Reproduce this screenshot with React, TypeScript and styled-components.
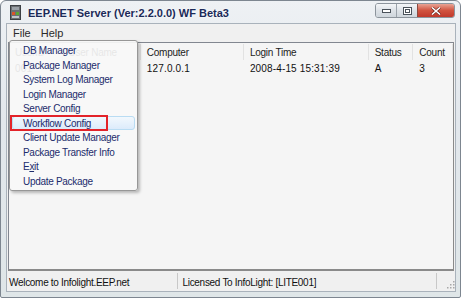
import * as React from 'react';
import styled, { createGlobalStyle } from 'styled-components';

const Global = createGlobalStyle`
  html, body { margin: 0; padding: 0; background: #fff; }
  body { font-family: "Liberation Sans", Arial, sans-serif; }
`;

const Window = styled.div`
  width: 461px;
  height: 298px;
  box-sizing: border-box;
  display: flex;
  flex-direction: column;
  background: linear-gradient(#eef1f4, #e2e7ec 40%, #dfe6e8);
  border: 1px solid #7d8690;
  border-radius: 6px 6px 2px 2px;
  overflow: hidden;
  position: relative;
`;

const TitleBar = styled.div`
  height: 22px;
  display: flex;
  align-items: center;
  padding: 0 5px 0 9px;
  flex-shrink: 0;
`;

const Title = styled.div`
  margin-left: 7px;
  margin-top: 2px;
  font-size: 11px;
  color: #1b2a58;
  font-weight: 700;
  flex: 1;
  text-shadow: 0 0 3px #fff;
`;

const Caption = styled.div`
  display: flex;
  align-self: flex-start;
  margin-top: 2px;
  border: 1px solid #8c949c;
  border-radius: 3px;
  overflow: hidden;
`;

const CapBtn = styled.div<{ $close?: boolean; $w: number }>`
  width: ${p => p.$w}px;
  height: 13px;
  display: flex;
  align-items: center;
  justify-content: center;
  background: ${p => p.$close
    ? 'linear-gradient(#e8a394, #d1533f 50%, #c0392b)'
    : 'linear-gradient(#f4f6f8, #dde2e7 50%, #cfd6dc)'};
  border-left: ${p => p.$close ? '1px solid #8c4a40' : '1px solid #9aa2aa'};
  &:first-child { border-left: none; }
`;

const Client = styled.div`
  flex: 1;
  display: flex;
  flex-direction: column;
  margin: 0 4px 5px 5px;
  background: #f0f0f0;
  position: relative;
  border: 1px solid #a9b2bb;
`;

const MenuBar = styled.div`
  height: 17px;
  display: flex;
  align-items: center;
  padding-left: 1px;
  font-size: 11px;
  color: #2a2a2a;
  flex-shrink: 0;
`;

const MenuTop = styled.div`
  padding: 0 5px;
  height: 16px;
  line-height: 16px;
`;

const ListWrap = styled.div`
  flex: 1;
  margin: 1px 1px 0 1px;
  background: #f5f5f5;
  border: 1px solid #828790;
  border-right-color: #8a8a8a;
  border-bottom: 2px solid #8a8a8a;
  font-size: 10px;
  color: #111;
`;

const Row = styled.div<{ $head?: boolean }>`
  display: flex;
  height: 16px;
  line-height: 17px;
  margin-top: ${p => p.$head ? 1 : 0}px;
  color: ${p => p.$head ? '#222' : '#111'};
  letter-spacing: ${p => p.$head ? -0.25 : 0.15}px;
`;

const Cell = styled.div<{ $w: number; $head?: boolean }>`
  width: ${p => p.$w}px;
  box-sizing: border-box;
  padding-left: 6px;
  white-space: nowrap;
  overflow: hidden;
  border-right: ${p => p.$head ? '1px solid #e2e2e2' : 'none'};
`;

const StatusBar = styled.div`
  height: 20px;
  display: flex;
  align-items: center;
  font-size: 10px;
  letter-spacing: -0.3px;
  color: #111;
  flex-shrink: 0;
`;

const StatusCell = styled.div<{ $w?: number }>`
  ${p => p.$w ? `width: ${p.$w}px;` : 'flex: 1;'}
  height: 16px;
  line-height: 19px;
  padding-left: 2px;
  box-sizing: border-box;
  border-right: 1px solid #c8c8c8;
  white-space: nowrap;
`;

const Grip = styled.div`
  width: 18px;
  height: 16px;
  display: flex;
  align-items: flex-end;
  justify-content: flex-end;
`;

const DropMenu = styled.div`
  position: absolute;
  left: 2px;
  top: 16px;
  width: 129px;
  box-sizing: border-box;
  padding: 2px;
  background: rgba(247, 247, 247, 0.92);
  border: 1px solid #979797;
  border-radius: 3px;
  box-shadow: 2px 2px 3px rgba(0, 0, 0, 0.25);
  font-size: 10px;
  letter-spacing: -0.3px;
  color: #1c2c6c;
`;

const Item = styled.div<{ $hot?: boolean }>`
  height: 14.5px;
  line-height: 14px;
  padding-left: 10px;
  position: relative;
  border-radius: 3px;
  box-sizing: border-box;
  border: 1px solid ${p => p.$hot ? '#b9dcf3' : 'transparent'};
  background: ${p => p.$hot ? 'linear-gradient(#f2f8fd, #dcebfb)' : 'transparent'};
  white-space: nowrap;
`;

const Annotation = styled.div`
  position: absolute;
  left: -3px;
  top: -2px;
  width: 98px;
  height: 16px;
  border: 2px solid #e3232a;
  box-sizing: border-box;
`;

const columns = [
  { t: 'UserID', w: 54 },
  { t: 'User Name', w: 79 },
  { t: 'Computer', w: 104 },
  { t: 'Login Time', w: 126 },
  { t: 'Status', w: 45 },
  { t: 'Count', w: 40 },
];

const row = ['001', '', '127.0.0.1', '2008-4-15 15:31:39', 'A', '3'];

const items = [
  'DB Manager',
  'Package Manager',
  'System Log Manager',
  'Login Manager',
  'Server Config',
  'Workflow Config',
  'Client Update Manager',
  'Package Transfer Info',
  'Exit',
  'Update Package',
];

function AppIcon() {
  return (
    <svg width="11" height="15" viewBox="0 0 11 15">
      <rect x="0.5" y="0.5" width="10" height="14" fill="#6b6f73" stroke="#3c4044" />
      <rect x="2" y="2" width="7" height="3" fill="#9aa0a6" />
      <rect x="2" y="7" width="3" height="3" fill="#d9542b" />
      <rect x="6" y="7" width="3" height="3" fill="#5aa832" />
      <rect x="2" y="11" width="7" height="2" fill="#c0c4c8" />
    </svg>
  );
}

export default function App() {
  return (
    <>
      <Global />
      <Window>
        <TitleBar>
          <AppIcon />
          <Title>EEP.NET Server (Ver:2.2.0.0) WF Beta3</Title>
          <Caption>
            <CapBtn $w={20}>
              <svg width="9" height="4"><rect x="0.5" y="0.5" width="8" height="3" fill="#fff" stroke="#4a525a" /></svg>
            </CapBtn>
            <CapBtn $w={20}>
              <svg width="9" height="8"><rect x="0.5" y="0.5" width="8" height="7" fill="#fff" stroke="#4a525a" /><rect x="2.5" y="2.5" width="4" height="3" fill="none" stroke="#4a525a" /></svg>
            </CapBtn>
            <CapBtn $w={36} $close>
              <svg width="10" height="8" viewBox="0 0 10 8">
                <path d="M1 0.5 L9 7.5 M9 0.5 L1 7.5" stroke="#5a1a12" strokeWidth="2.6" />
                <path d="M1 0.5 L9 7.5 M9 0.5 L1 7.5" stroke="#fff" strokeWidth="1.6" />
              </svg>
            </CapBtn>
          </Caption>
        </TitleBar>
        <Client>
          <MenuBar>
            <MenuTop>File</MenuTop>
            <MenuTop>Help</MenuTop>
          </MenuBar>
          <ListWrap>
            <Row $head>
              {columns.map(c => <Cell key={c.t} $w={c.w} $head>{c.t}</Cell>)}
            </Row>
            <Row>
              {row.map((v, i) => <Cell key={i} $w={columns[i].w}>{v}</Cell>)}
            </Row>
          </ListWrap>
          <StatusBar>
            <StatusCell $w={171}>Welcome to Infolight.EEP.net</StatusCell>
            <StatusCell>&nbsp;Licensed To InfoLight: [LITE001]</StatusCell>
            <Grip>
              <svg width="10" height="10" viewBox="0 0 10 10" fill="#a8a8a8">
                <rect x="8" y="2" width="1.5" height="1.5" />
                <rect x="5" y="5" width="1.5" height="1.5" />
                <rect x="8" y="5" width="1.5" height="1.5" />
                <rect x="2" y="8" width="1.5" height="1.5" />
                <rect x="5" y="8" width="1.5" height="1.5" />
                <rect x="8" y="8" width="1.5" height="1.5" />
              </svg>
            </Grip>
          </StatusBar>
          <DropMenu>
            {items.map(t => (
              <Item key={t} $hot={t === 'Workflow Config'}>
                {t === 'Exit' ? <>E<u>x</u>it</> : t}
                {t === 'Workflow Config' && <Annotation />}
              </Item>
            ))}
          </DropMenu>
        </Client>
      </Window>
    </>
  );
}
